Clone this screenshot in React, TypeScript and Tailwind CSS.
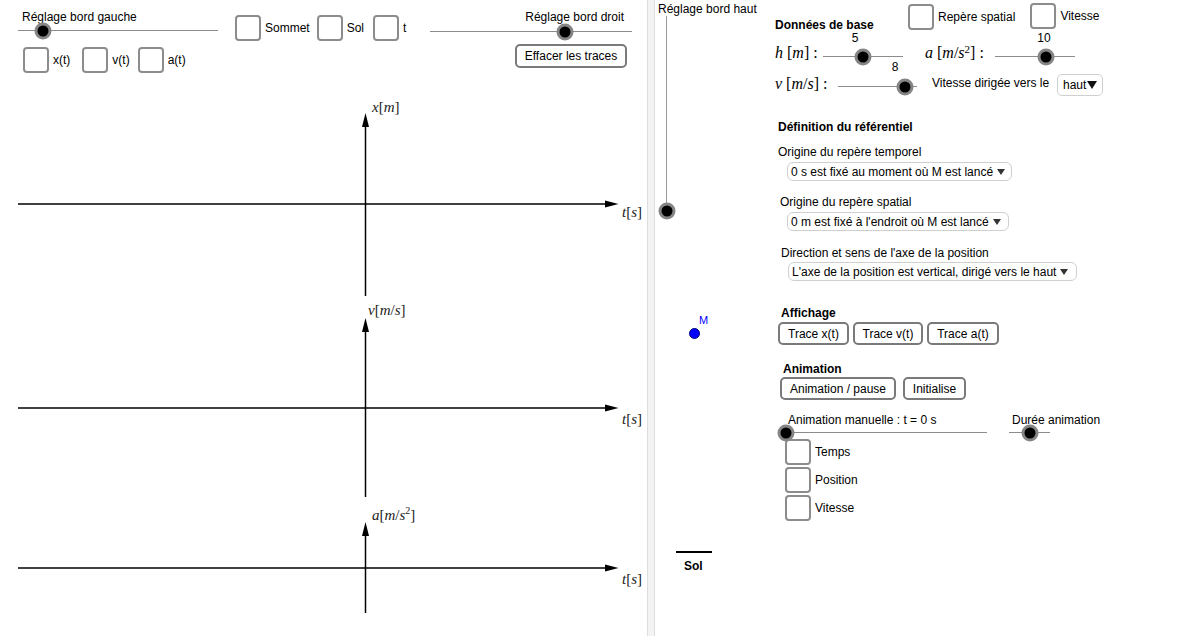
import React from 'react'

const mathCls = "font-['Liberation_Serif','Times_New_Roman',serif] text-[16px] leading-[16px]"

function Knob({ className }: { className: string }) {
  return (
    <span
      className={`absolute h-[17px] w-[17px] -translate-x-1/2 -translate-y-1/2 rounded-full border-[3px] border-[#858585] bg-black ${className}`}
    />
  )
}

function Track({ className, children }: { className: string; children?: React.ReactNode }) {
  return <div className={`relative h-px bg-[#8c8c8c] ${className}`}>{children}</div>
}

function Value({ className, children }: { className: string; children: React.ReactNode }) {
  return <span className={`absolute -translate-x-1/2 -translate-y-1/2 leading-[9px] ${className}`}>{children}</span>
}

function Check({ label, className = '' }: { label: string; className?: string }) {
  return (
    <div className={`flex items-center ${className}`}>
      <span className="h-[26px] w-[26px] shrink-0 rounded-[4px] border-2 border-[#8c8c8c] bg-white" />
      <span className="ml-[4px] whitespace-nowrap">{label}</span>
    </div>
  )
}

function Btn({ children, className = '' }: { children: React.ReactNode; className?: string }) {
  return (
    <button
      type="button"
      className={`flex h-[23px] items-center justify-center rounded-[5px] border-2 border-[#7a7a7a] bg-white ${className}`}
    >
      {children}
    </button>
  )
}

function Dropdown({ text, className = '' }: { text: string; className?: string }) {
  return (
    <div className={`flex h-[19px] items-center rounded-[6px] border border-[#cfcfcf] pl-[3px] ${className}`}>
      <span className="whitespace-nowrap">{text}</span>
      <svg width="8" height="6" viewBox="0 0 8 6" className="ml-[4px]">
        <path d="M0 0H8L4 6Z" fill="#333" />
      </svg>
    </div>
  )
}

const graphs = [
  { y: 204, top: 113, bottom: 296, tY: 217, label: 'x' },
  { y: 408, top: 318, bottom: 497, tY: 424, label: 'v' },
  { y: 568, top: 522, bottom: 613, tY: 584, label: 'a' },
]

function Axes() {
  return (
    <svg width="647" height="558" viewBox="0 80 647 558" className="block">
      {graphs.map((g) => (
        <g key={g.label}>
          <line x1="18" y1={g.y} x2="607" y2={g.y} stroke="#000" strokeWidth="1.5" />
          <path d={`M618.5 ${g.y}L605 ${g.y - 3.5}L605 ${g.y + 3.5}Z`} fill="#000" />
          <line x1="365.5" y1={g.bottom} x2="365.5" y2={g.top + 12} stroke="#000" strokeWidth="1.5" />
          <path d={`M365.5 ${g.top}L362 ${g.top + 14}L369 ${g.top + 14}Z`} fill="#000" />
          <text x="622" y={g.tY} fontFamily="Liberation Serif, serif" fontSize="15" fill="#222">
            <tspan fontStyle="italic">t</tspan>[<tspan fontStyle="italic">s</tspan>]
          </text>
        </g>
      ))}
      <text x="372" y="112" fontFamily="Liberation Serif, serif" fontSize="15" fill="#222">
        <tspan fontStyle="italic">x</tspan>[<tspan fontStyle="italic">m</tspan>]
      </text>
      <text x="368" y="315" fontFamily="Liberation Serif, serif" fontSize="15" fill="#222">
        <tspan fontStyle="italic">v</tspan>[<tspan fontStyle="italic">m</tspan>/<tspan fontStyle="italic">s</tspan>]
      </text>
      <text x="372" y="520" fontFamily="Liberation Serif, serif" fontSize="15" fill="#222">
        <tspan fontStyle="italic">a</tspan>[<tspan fontStyle="italic">m</tspan>/<tspan fontStyle="italic">s</tspan>
        <tspan fontSize="10" dy="-6">2</tspan>
        <tspan dy="6">]</tspan>
      </text>
    </svg>
  )
}

function LeftPanel() {
  return (
    <div className="w-[647px] shrink-0">
      <div className="flex h-[42px]">
        <div className="ml-[18px] w-[200px] pt-[10px]">
          <div className="pl-[4px]">Réglage bord gauche</div>
          <Track className="mt-[6px]">
            <Knob className="left-[25px] top-1/2" />
          </Track>
        </div>
        <div className="ml-[17px] mt-[13px] flex">
          <Check label="Sommet" />
          <Check label="Sol" className="ml-[7px]" />
          <Check label="t" className="ml-[9px]" />
        </div>
        <div className="ml-auto mr-[15px] w-[202px] pt-[10px]">
          <div className="pr-[8px] text-right">Réglage bord droit</div>
          <Track className="mt-[7px]">
            <Knob className="left-[135px] top-1/2" />
          </Track>
        </div>
      </div>
      <div className="flex h-[38px] items-start">
        <div className="ml-[23px] mt-[5px] flex">
          <Check label="x(t)" />
          <Check label="v(t)" className="ml-[12px]" />
          <Check label="a(t)" className="ml-[8px]" />
        </div>
        <Btn className="ml-auto mr-[20px] mt-[2px] h-[24px] w-[112px]">Effacer les traces</Btn>
      </div>
      <Axes />
    </div>
  )
}

function CanvasColumn() {
  return (
    <div className="w-[120px] shrink-0">
      <div className="whitespace-nowrap pl-[3px] pt-[2px]">Réglage bord haut</div>
      <div className="relative ml-[11px] h-[195px] w-px bg-[#999]">
        <Knob className="left-1/2 top-full" />
      </div>
      <div className="relative ml-[34px] mt-[117px] h-[11px] w-[11px] rounded-full border border-[#00007a] bg-[#0000ff]">
        <span className="absolute -top-[15px] left-[9px] text-[11px] leading-[12px] text-[#0000ff]">M</span>
      </div>
      <div className="ml-[21px] mt-[212px] h-[2px] w-[36px] bg-black" />
      <div className="ml-[29px] mt-[6px] font-bold">Sol</div>
    </div>
  )
}

function FormColumn() {
  return (
    <div className="w-[419px] shrink-0">
      <div className="flex h-[30px]">
        <div className="w-[133px] pt-[18px] font-bold">Données de base</div>
        <Check label="Repère spatial" className="mt-[3px]" />
        <Check label="Vitesse" className="ml-[15px] mt-[2px]" />
      </div>

      <div className="flex h-[36px]">
        <div className={`w-[48px] whitespace-nowrap pt-[15px] ${mathCls}`}>
          <i>h</i> [<i>m</i>] :
        </div>
        <Track className="mt-[26px] w-[80px]">
          <Value className="left-[32px] -top-[18px]">5</Value>
          <Knob className="left-[40px] top-1/2" />
        </Track>
        <div className={`ml-[22px] w-[70px] whitespace-nowrap pt-[15px] ${mathCls}`}>
          <i>a</i> [<i>m</i>/<i>s</i>
          <sup className="text-[11px]">2</sup>] :
        </div>
        <Track className="mt-[26px] w-[80px]">
          <Value className="left-[49px] -top-[18px]">10</Value>
          <Knob className="left-[51px] top-1/2" />
        </Track>
      </div>

      <div className="flex h-[34px]">
        <div className={`w-[63px] whitespace-nowrap pt-[10px] ${mathCls}`}>
          <i>v</i> [<i>m</i>/<i>s</i>] :
        </div>
        <Track className="mt-[20px] w-[79px]">
          <Value className="left-[57px] -top-[19px]">8</Value>
          <Knob className="left-[67px] top-1/2" />
        </Track>
        <div className="ml-[15px] w-[125px] whitespace-nowrap pt-[10px]">Vitesse dirigée vers le</div>
        <div className="mt-[8px] flex h-[22px] w-[46px] items-center rounded-[5px] border border-[#cfcfcf] pl-[5px]">
          <span>haut</span>
          <svg width="10" height="8" viewBox="0 0 10 8" className="ml-[1px]">
            <path d="M0 0H10L5 8Z" fill="#111" />
          </svg>
        </div>
      </div>

      <div className="mt-[20px] pl-[3px] font-bold">Définition du référentiel</div>
      <div className="mt-[11px] pl-[3px]">Origine du repère temporel</div>
      <Dropdown text="0 s est fixé au moment où M est lancé" className="ml-[12px] mt-[3px] w-[225px]" />
      <div className="mt-[14px] pl-[5px]">Origine du repère spatial</div>
      <Dropdown text="0 m est fixé à l'endroit où M est lancé" className="ml-[12px] mt-[3px] w-[222px]" />
      <div className="mt-[15px] pl-[6px]">Direction et sens de l'axe de la position</div>
      <Dropdown
        text="L'axe de la position est vertical, dirigé vers le haut"
        className="ml-[13px] mt-[2px] w-[289px]"
      />

      <div className="mt-[25px] pl-[6px] font-bold">Affichage</div>
      <div className="ml-[3px] mt-[2px] flex gap-[4px]">
        <Btn className="w-[71px]">Trace x(t)</Btn>
        <Btn className="w-[70px]">Trace v(t)</Btn>
        <Btn className="w-[72px]">Trace a(t)</Btn>
      </div>

      <div className="mt-[17px] pl-[8px] font-bold">Animation</div>
      <div className="ml-[5px] mt-[1px] flex gap-[7px]">
        <Btn className="w-[116px]">Animation / pause</Btn>
        <Btn className="w-[63px]">Initialise</Btn>
      </div>

      <div className="flex">
        <div className="ml-[11px] w-[201px] pt-[13px]">
          <div className="pl-[2px]">Animation manuelle : t = 0 s</div>
          <Track className="mt-[5px]">
            <Knob className="left-0 top-1/2" />
          </Track>
        </div>
        <div className="ml-[22px] w-[41px] pt-[13px]">
          <div className="whitespace-nowrap pl-[3px]">Durée animation</div>
          <Track className="mt-[5px]">
            <Knob className="left-[21px] top-1/2" />
          </Track>
        </div>
      </div>

      <div className="ml-[10px] mt-[6px] flex flex-col gap-[2px]">
        <Check label="Temps" />
        <Check label="Position" />
        <Check label="Vitesse" />
      </div>
    </div>
  )
}

export default function App() {
  return (
    <div className="flex h-[638px] w-[1194px] overflow-hidden bg-white font-['Liberation_Sans',Arial,sans-serif] text-[12px] leading-[14px] text-black">
      <LeftPanel />
      <div className="h-[636px] w-[8px] shrink-0 border-x border-[#dedede] bg-[#f3f3f3]" />
      <div className="flex w-[539px] shrink-0">
        <CanvasColumn />
        <FormColumn />
      </div>
    </div>
  )
}
